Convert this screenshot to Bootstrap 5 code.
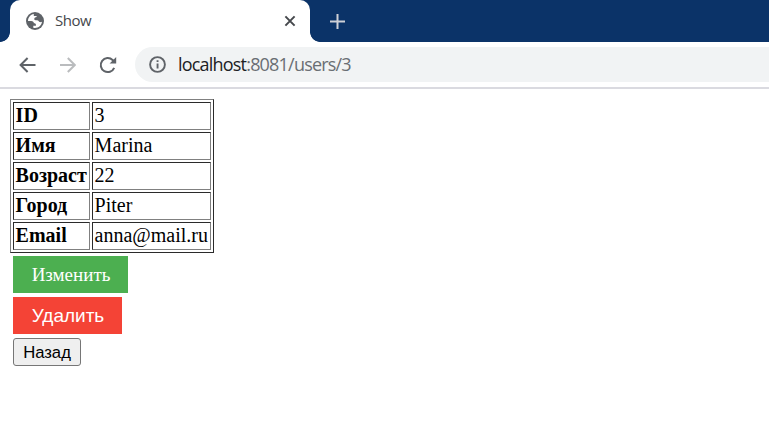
<!DOCTYPE html>
<html lang="ru">
<head>
<meta charset="utf-8">
<meta name="viewport" content="width=device-width, initial-scale=1">
<title>Show</title>
<link href="https://cdn.jsdelivr.net/npm/bootstrap@5.3.0/dist/css/bootstrap.min.css" rel="stylesheet">
<style>
body{font-family:"Liberation Serif",serif;color:#000;background:#fff;overflow:hidden}
svg{display:block;flex:none}
.tabstrip{height:42px;background:#0b3368;padding-left:10px}
.browser-tab{width:300px;height:42px;background:#fff;border-radius:10px 10px 0 0;padding:0 13px 0 16px;position:relative}
.browser-tab::before,.browser-tab::after{content:"";position:absolute;bottom:0;width:10px;height:10px}
.browser-tab::before{left:-10px;background:radial-gradient(circle at 0 0,transparent 9.5px,#fff 10.2px)}
.browser-tab::after{right:-10px;background:radial-gradient(circle at 100% 0,transparent 9.5px,#fff 10.2px)}
.tab-title{font:15px/20px "Open Sans",sans-serif;color:#45484c;margin-left:11px;padding-bottom:2px;letter-spacing:-.5px}
.new-tab{margin-left:20px}
.toolbar{height:47px;border-bottom:2px solid #dadae0;padding-left:19px}
.reload{margin-left:23px}
.omnibox{height:35px;background:#f1f3f4;border-radius:18px 0 0 18px;margin-left:18px;padding-left:14px}
.address{font:18px/24px "Open Sans",sans-serif;color:#6a6e73;margin-left:12px;padding-bottom:1px;letter-spacing:-.8px;white-space:nowrap}
.address span{color:#202124}
.page{padding:10px 0 0 10px}
.user-table{border:1px solid;border-color:#808080 #2b2b2b #2b2b2b #808080;border-collapse:separate;border-spacing:2px;width:204px;table-layout:fixed;font-size:20px;line-height:24px}
.user-table th,.user-table td{border:1px solid;border-color:#2b2b2b #808080 #808080 #2b2b2b;padding:0 0 2px 1.6px;height:28px;white-space:nowrap}
.user-table th{width:77px}
.user-table td{width:119px}
.actions{padding:3px 0 0 3px;gap:4px}
.action{--bs-btn-border-width:0;--bs-btn-border-radius:0;height:37px;padding:0 0 0 1px;line-height:37px;color:#fff}
.edit{width:115px;background:#4caf50;font-family:"Liberation Serif",serif;font-size:19px}
.delete{width:109px;background:#f44336;font-family:"Liberation Sans",sans-serif;font-size:19px}
.back{width:68px;height:28px;padding:0;border:1px solid #767676;border-radius:3px;background:#efefef;color:#000;font:16.67px/25px "Liberation Sans",sans-serif}
</style>
<script src="https://cdn.jsdelivr.net/npm/bootstrap@5.3.0/dist/js/bootstrap.bundle.min.js"></script>
</head>
<body>
<header>
  <div class="tabstrip d-flex align-items-center">
    <div class="browser-tab d-flex align-items-center">
      <svg width="18" height="18" viewBox="0 0 18 18"><circle cx="9" cy="9" r="9" fill="#5f6368"/><path fill="#fff" d="M7.8 2.1C4.4 2.7 2 5.6 2 9l3.2.1c1.9.1 2.5.9 2.7 2.1.9.2 2 .3 2 1.4v1.1H7.3v2.1c.6.1 1.1.2 1.7.2 3.6 0 6.6-2.7 7-6.2-.7.5-1.5.5-2.2.3-1.1-.3-1-1.5-2-1.7-1.4-.3-3.5.4-3.5-1.3 0-1.5 1.2-1.9 2.3-2V3.9H7.8z"/></svg>
      <span class="tab-title me-auto">Show</span>
      <svg width="14" height="14" viewBox="0 0 14 14" fill="none" stroke="#45484c" stroke-width="2"><path d="M2.4 2.4l9.2 9.2M11.6 2.4l-9.2 9.2"/></svg>
    </div>
    <svg class="new-tab" width="15" height="15" viewBox="0 0 15 15" fill="none" stroke="#ced0d6" stroke-width="2"><path d="M7.5 0v15M0 7.5h15"/></svg>
  </div>
  <div class="toolbar d-flex align-items-center">
    <svg width="17" height="16" viewBox="0 0 17 16" fill="none" stroke="#5f6368" stroke-width="2"><path d="M16.5 8H2M8.6 1L1.6 8l7 7"/></svg>
    <svg class="ms-4" width="16" height="16" viewBox="0 0 16 16" fill="none" stroke="#babcbe" stroke-width="2"><path d="M0 8h14.5M7.8 1l7 7-7 7"/></svg>
    <svg class="reload" width="18" height="18" viewBox="0 0 18 18"><path fill="none" stroke="#5f6368" stroke-width="2" d="M15.2 11.8A7 7 0 1 1 13.6 4l1.2 1.3"/><path fill="#5f6368" d="M17.2 1v6.6h-6.6z"/></svg>
    <div class="omnibox flex-grow-1 d-flex align-items-center">
      <svg width="17" height="17" viewBox="0 0 17 17"><circle cx="8.5" cy="8.5" r="7.4" fill="none" stroke="#5f6368" stroke-width="1.9"/><path fill="#5f6368" d="M7.6 4.2h1.9v1.9H7.6zM7.6 7.4h1.9v5.2H7.6z"/></svg>
      <div class="address"><span>localhost</span>:8081/users/3</div>
    </div>
  </div>
</header>
<main class="page">
  <table class="user-table">
    <tr><th>ID</th><td>3</td></tr>
    <tr><th>Имя</th><td>Marina</td></tr>
    <tr><th>Возраст</th><td>22</td></tr>
    <tr><th>Город</th><td>Piter</td></tr>
    <tr><th>Email</th><td>anna@mail.ru</td></tr>
  </table>
  <div class="actions d-flex flex-column align-items-start">
    <a href="#" class="btn action edit">Изменить</a>
    <button type="button" class="btn action delete">Удалить</button>
    <button type="button" class="back">Назад</button>
  </div>
</main>
</body>
</html>
